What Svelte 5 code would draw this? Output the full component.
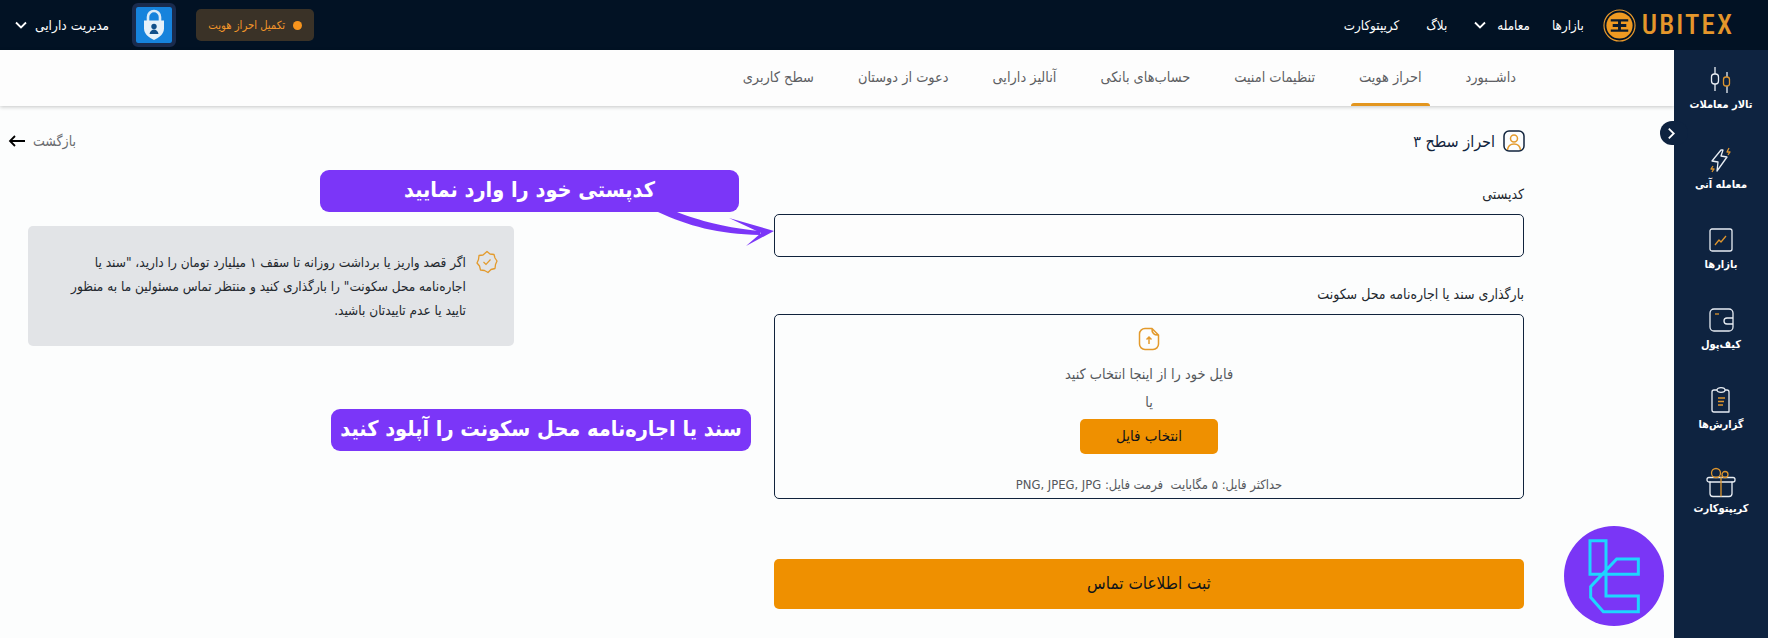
<script>
	const tabs = ['داشــبورد', 'احراز هویت', 'تنظیمات امنیت', 'حساب‌های بانکی', 'آنالیز دارایی', 'دعوت از دوستان', 'سطح کاربری'];
</script>

<div class="page">
	<header class="top">
		<div class="top-left">
			<div class="assets">
				<svg class="chev" viewBox="0 0 12 8"><path d="M1 1.5l5 5 5-5" /></svg>
				<span dir="rtl">مدیریت دارایی</span>
			</div>
			<div class="lock">
				<svg viewBox="0 0 36 36" width="36" height="36">
					<rect width="36" height="36" rx="2" fill="#1683dc" />
					<path d="M12 14v-4a6 6 0 0 1 12 0v4" fill="none" stroke="#dcebf7" stroke-width="2.6" />
					<path d="M8 13.5h20v8c0 5.500-5 9-10 11.500-5-2.500-10-6-10-11.500z" fill="#e6f1f9" />
					<circle cx="18" cy="19.500" r="2.700" fill="#12508a" />
					<path d="M13.500 27c.5-3 2.500-4.500 4.500-4.500s4 1.500 4.500 4.500z" fill="#12508a" />
				</svg>
			</div>
			<div class="kyc" dir="rtl">
				<i></i>
				<span>تکمیل احراز هویت</span>
			</div>
		</div>
		<nav class="top-right">
			<span class="nav-link n4" dir="rtl">کریپتوکارت</span>
			<span class="nav-link n3" dir="rtl">بلاگ</span>
			<svg class="chev n2c" viewBox="0 0 12 8"><path d="M1 1.500l5 5 5-5" /></svg>
			<span class="nav-link n2" dir="rtl">معامله</span>
			<span class="nav-link n1" dir="rtl">بازارها</span>
			<div class="brand">
				<svg viewBox="0 0 34 34" width="33" height="33">
					<circle cx="17" cy="17" r="16" fill="none" stroke="#e8982b" stroke-width="1.200" />
					<circle cx="17" cy="17" r="13.500" fill="#ef9a22" />
					<path d="M8 10.500h18v2.500h-7.500v2.500h5.500v3h-5.500v2.500h7.500v2.500h-18v-2.500h7.500v-2.500h-5.500v-3h5.500v-2.500h-7.500z" fill="#0b1a2c" />
				</svg>
				<span class="word">UBITEX</span>
			</div>
		</nav>
	</header>

	<div class="body">
		<main class="main">
			<div class="tabs" dir="rtl">
				{#each tabs as t, i}
					<span class="tab" class:active={i === 1}>{t}</span>
				{/each}
			</div>

			<div class="title-row">
				<div class="back">
					<svg viewBox="0 0 18 12" width="18" height="12"><path d="M17 6H2M7 1L2 6l5 5" /></svg>
					<span dir="rtl">بازگشت</span>
				</div>
				<div class="title" dir="rtl">
					<svg viewBox="0 0 22 22" width="22" height="22">
						<rect x="1" y="1" width="20" height="20" rx="5" fill="none" stroke="#10233c" stroke-width="1.500" />
						<circle cx="11" cy="8.500" r="3.500" fill="none" stroke="#e39a2c" stroke-width="1.500" />
						<path d="M4.500 20c.5-4 3-6 6.500-6s6 2 6.500 6" fill="none" stroke="#e39a2c" stroke-width="1.500" />
					</svg>
					<span>احراز سطح ۳</span>
				</div>
			</div>

			<div class="columns">
				<div class="note" dir="rtl">
					<svg viewBox="0 0 22 24" width="22" height="24">
						<path d="M11 1.500l3 2.500 4 .5 1 3.500 2 3-1.500 3.500-.5 4-4 1-3 3-3.500-2-4-.5-1-4-2.500-3 1.500-3.500.5-4 4-.5z" fill="none" stroke="#e39a2c" stroke-width="1.300" stroke-linejoin="round" />
						<path d="M7.500 12l2.500 2.500 4.500-5" fill="none" stroke="#e39a2c" stroke-width="1.200" />
					</svg>
					<p>اگر قصد واریز یا برداشت روزانه تا سقف ۱ میلیارد تومان را دارید، "سند یا اجاره‌نامه محل سکونت" را بارگذاری کنید و منتظر تماس مسئولین ما به منظور تایید یا عدم تاییدتان باشید.</p>
				</div>

				<form class="form" dir="rtl">
					<div class="label">کدپستی</div>
					<input class="input" type="text" />
					<div class="label second">بارگذاری سند یا اجاره‌نامه محل سکونت</div>
					<div class="upload">
						<svg viewBox="0 0 22 24" width="22" height="24">
							<path d="M14 1.500H7a5.500 5.500 0 0 0-5.500 5.500v10A5.500 5.500 0 0 0 7 22.500h8a5.500 5.500 0 0 0 5.500-5.500V8c-4 .5-7-2-6.500-6.500zM14 1.500l6.500 6.500" fill="none" stroke="#e39a2c" stroke-width="1.500" stroke-linejoin="round" />
							<path d="M11 17v-7M8.500 12.500L11 10l2.500 2.500" fill="none" stroke="#e39a2c" stroke-width="1.500" />
						</svg>
						<div class="pick">فایل خود را از اینجا انتخاب کنید</div>
						<div class="or">یا</div>
						<button class="choose" type="button">انتخاب فایل</button>
						<div class="limits">حداکثر فایل: ۵ مگابایت &nbsp;فرمت فایل: PNG, JPEG, JPG</div>
					</div>
					<button class="submit" type="button">ثبت اطلاعات تماس</button>
				</form>
			</div>

			<div class="callout c1" dir="rtl">کدپستی خود را وارد نمایید</div>
			<div class="callout c2" dir="rtl">سند یا اجاره‌نامه محل سکونت را آپلود کنید</div>
			<svg class="arrow" viewBox="0 0 120 60" width="120" height="60">
				<path d="M0 2H19C35 8 60 17 102 21L102 25C60 24 30 16 0 2z" fill="#7b36f8" />
				<path d="M71 8L116 21L88 36L103 23z" fill="#7b36f8" />
			</svg>

			<div class="watermark">
				<svg viewBox="72 558 300 300" width="100" height="100">
					<circle cx="222" cy="708" r="150" fill="#7a36f6" />
					<path d="M150 602H198V768H295V815H190L152 772V740L230 657H295V703H150Z" fill="none" stroke="#1ed5ff" stroke-width="9" />
				</svg>
			</div>
		</main>

		<aside class="side" dir="rtl">
			<button class="toggle" type="button" aria-label="باز کردن">
				<svg viewBox="0 0 10 14" width="9" height="13"><path d="M2 1.500L7.500 7 2 12.500" /></svg>
			</button>
			<div class="item">
				<svg viewBox="0 0 26 26" width="26" height="26">
					<path d="M7 0v7M7 17v7M19 5v5M19 19v7" class="w" />
					<rect x="3.500" y="7" width="7" height="10" rx="3" class="w" />
					<rect x="15.500" y="10" width="6" height="9" rx="2.500" class="o" />
				</svg>
				<span>تالار معاملات</span>
			</div>
			<div class="item">
				<svg viewBox="0 0 26 26" width="26" height="26">
					<path d="M13 3L4 14l6 1-1 9 10-14-6-1 2-6z" class="w" />
					<path d="M21 1l-2 4h3l-2 3M5 19l-2 3h3l-2 3" class="o" />
				</svg>
				<span>معامله آنی</span>
			</div>
			<div class="item">
				<svg viewBox="0 0 24 24" width="24" height="24">
					<rect x="1" y="1" width="22" height="22" rx="2" class="w" />
					<path d="M6 17l4-5 2 2 5-6" class="o" />
				</svg>
				<span>بازارها</span>
			</div>
			<div class="item">
				<svg viewBox="0 0 26 24" width="26" height="24">
					<path d="M6 1h15a4 4 0 0 1 4 4v14a4 4 0 0 1-4 4H6a4 4 0 0 1-4-4V5a4 4 0 0 1 4-4z" class="w" />
					<path d="M25 10h-6a2.500 2.500 0 0 0 0 6h6" class="w" />
					<path d="M7 6h4" class="o" />
				</svg>
				<span>کیف‌پول</span>
			</div>
			<div class="item">
				<svg viewBox="0 0 20 26" width="20" height="26">
					<path d="M6 3H3a2 2 0 0 0-2 2v18a2 2 0 0 0 2 2h15V5a2 2 0 0 0-2-2h-2" class="w" />
					<ellipse cx="10" cy="3" rx="4" ry="2.300" class="w" />
					<path d="M7 11h7M7 14.500h6M7 18h5" class="o" />
				</svg>
				<span>گزارش‌ها</span>
			</div>
			<div class="item gift">
				<svg viewBox="0 0 30 30" width="30" height="30">
					<path d="M4 14v12a3 3 0 0 0 3 3h16a3 3 0 0 0 3-3V14" class="w" />
					<rect x="1" y="10" width="28" height="4.500" rx="2" class="w" />
					<circle cx="10" cy="5.500" r="4.500" class="o" />
					<circle cx="19" cy="7" r="3" class="o" />
					<path d="M15 9v20" class="o" />
				</svg>
				<span>کریپتوکارت</span>
			</div>
		</aside>
	</div>
</div>

<style>
	:global(body) {
		margin: 0;
		background: #fcfdfd;
	}
	.page {
		width: 1768px;
		height: 638px;
		overflow: hidden;
		font-family: "DejaVu Sans Condensed", "DejaVu Sans", sans-serif;
		font-stretch: condensed;
		display: flex;
		flex-direction: column;
	}

	/* header */
	.top {
		height: 50px;
		flex: none;
		background: #021224;
		color: #fff;
		display: flex;
		align-items: center;
		justify-content: space-between;
		font-size: 12px;
	}
	.top-left {
		display: flex;
		align-items: center;
		padding-left: 15px;
	}
	.assets {
		display: flex;
		align-items: center;
		gap: 8px;
		width: 117px;
		font-size: 13.600px;
		white-space: nowrap;
	}
	.chev {
		width: 12px;
		height: 8px;
		flex: none;
	}
	.chev path {
		fill: none;
		stroke: #fff;
		stroke-width: 1.800;
	}
	.lock {
		width: 36px;
		height: 36px;
		border: 4px solid #1a2b4d;
		border-radius: 6px;
		display: flex;
	}
	.kyc {
		margin-left: 20px;
		width: 118px;
		height: 32px;
		box-sizing: border-box;
		padding: 0 12px;
		background: #3a3227;
		border-radius: 5px;
		display: flex;
		align-items: center;
		gap: 8px;
		font-size: 11.200px;
		color: #f2952a;
		white-space: nowrap;
	}
	.kyc i {
		width: 9px;
		height: 9px;
		border-radius: 50%;
		background: #f7941d;
		flex: none;
	}
	.top-right {
		display: flex;
		align-items: center;
		padding-right: 36px;
	}
	.nav-link {
		font-size: 13.300px;
		white-space: nowrap;
	}
	.n4 {
		margin-right: 27px;
	}
	.n3 {
		margin-right: 27px;
	}
	.n2c {
		margin-right: 11px;
	}
	.n2 {
		margin-right: 22px;
	}
	.n1 {
		margin-right: 19px;
	}
	.brand {
		display: flex;
		align-items: center;
		gap: 6px;
	}
	.word {
		font-family: Roboto, sans-serif;
		font-size: 27px;
		line-height: 1;
		font-weight: 500;
		letter-spacing: 2.100px;
		margin-right: -2px;
		color: #e4962b;
	}

	.body {
		flex: 1;
		display: flex;
		min-height: 0;
	}
	.main {
		flex: 1;
		position: relative;
		min-width: 0;
	}

	/* tabs */
	.tabs {
		height: 56px;
		box-sizing: border-box;
		padding-right: 150px;
		background: #fdfdfd;
		box-shadow: 0 1px 4px rgba(0, 0, 0, 0.22);
		display: flex;
		align-items: stretch;
		gap: 28px;
	}
	.tab {
		padding: 0 8px 2px;
		display: flex;
		align-items: center;
		font-size: 14.400px;
		color: #5d5f63;
		white-space: nowrap;
		position: relative;
	}
	.tab.active::after {
		content: "";
		position: absolute;
		left: 0;
		right: 0;
		bottom: 0;
		height: 3px;
		border-radius: 3px 3px 0 0;
		background: #e3961f;
	}

	/* title */
	.title-row {
		display: flex;
		align-items: center;
		justify-content: space-between;
		padding: 22px 149px 0 8px;
		height: 26px;
	}
	.back {
		display: flex;
		align-items: center;
		gap: 7px;
		font-size: 14px;
		color: #6a6c70;
	}
	.back path {
		fill: none;
		stroke: #000;
		stroke-width: 1.800;
	}
	.title {
		display: flex;
		align-items: center;
		gap: 8px;
		font-size: 16px;
		color: #10233c;
	}

	.columns {
		display: flex;
		justify-content: space-between;
		padding: 0 150px 0 28px;
		align-items: flex-start;
	}

	/* note */
	.note {
		margin-top: 72px;
		width: 486px;
		height: 120px;
		box-sizing: border-box;
		padding: 24px 16px 0 28px;
		background: #e2e4e7;
		border-radius: 5px;
		display: flex;
		gap: 10px;
		color: #23282e;
	}
	.note p {
		margin: 0;
		font-size: 13.500px;
		line-height: 24px;
		flex: 1;
	}

	/* form */
	.form {
		width: 750px;
		flex: none;
	}
	.label {
		font-size: 14px;
		color: #23282e;
		height: 18px;
		line-height: 18px;
		margin-top: 31px;
		margin-bottom: 11px;
	}
	.label.second {
		margin-top: 28px;
	}
	.input {
		display: block;
		box-sizing: border-box;
		width: 750px;
		height: 43px;
		background: #fdfdfd;
		border: 1px solid #10233c;
		border-radius: 5px;
		padding: 0;
		margin: 0;
	}
	.upload {
		box-sizing: border-box;
		height: 185px;
		border: 1px solid #10233c;
		border-radius: 5px;
		padding-top: 12px;
		display: flex;
		flex-direction: column;
		align-items: center;
		color: #55585c;
	}
	.pick {
		margin-top: 14px;
		font-size: 14.400px;
		line-height: 18px;
	}
	.or {
		margin-top: 10px;
		font-size: 14.400px;
		line-height: 18px;
	}
	.choose {
		margin-top: 8px;
		width: 138px;
		height: 35px;
		border: none;
		background: #ef9000;
		border-radius: 5px;
		font: inherit;
		font-size: 15px;
		color: #10141a;
		padding: 0 0 2px;
	}
	.limits {
		margin-top: 22px;
		font-size: 12.900px;
		line-height: 18px;
		white-space: nowrap;
	}
	.submit {
		display: block;
		margin-top: 60px;
		width: 750px;
		height: 50px;
		border: none;
		background: #ef9000;
		border-radius: 5px;
		font: inherit;
		font-size: 17px;
		color: #10141a;
		padding: 0 0 2px;
	}

	/* annotations on top of the shot */
	.callout {
		position: absolute;
		height: 42px;
		background: #7b36f8;
		color: #fff;
		border-radius: 9px;
		display: flex;
		align-items: center;
		justify-content: center;
		font-size: 21.500px;
		font-weight: 700;
		white-space: nowrap;
		padding-bottom: 4px;
		box-sizing: border-box;
	}
	.c1 {
		left: 320px;
		top: 120px;
		width: 419px;
	}
	.c2 {
		left: 331px;
		top: 359px;
		width: 420px;
	}
	.arrow {
		position: absolute;
		left: 658px;
		top: 160px;
	}
	.watermark {
		position: absolute;
		left: 1564px;
		top: 476px;
		width: 100px;
		height: 100px;
	}

	/* sidebar */
	.side {
		width: 94px;
		flex: none;
		background: #0e2340;
		color: #fff;
		position: relative;
		display: flex;
		flex-direction: column;
		align-items: center;
		padding-top: 16px;
		box-sizing: border-box;
	}
	.item {
		height: 80px;
		display: flex;
		flex-direction: column;
		align-items: center;
		gap: 4px;
		font-size: 11px;
		font-weight: 700;
		white-space: nowrap;
	}
	.item svg {
		height: 28px;
		flex: none;
	}
	.gift {
		padding-top: 1px;
	}
	.gift svg {
		height: 31px;
	}
	.item .w,
	.item .o {
		fill: none;
		stroke-width: 1.300;
		stroke-linejoin: round;
	}
	.item .w {
		stroke: #e8edf3;
	}
	.item .o {
		stroke: #dd952e;
	}
	.toggle {
		position: absolute;
		right: 80px;
		top: 71px;
		width: 28px;
		height: 24px;
		border: none;
		border-radius: 12px;
		padding: 0 6px 0 0;
		box-sizing: border-box;
		background: #0e2340;
		display: flex;
		align-items: center;
		justify-content: center;
	}
	.toggle svg {
		flex: none;
	}
	.toggle path {
		fill: none;
		stroke: #fff;
		stroke-width: 2;
	}
</style>
